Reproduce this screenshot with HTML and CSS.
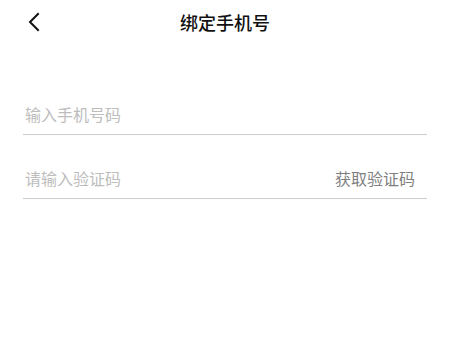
FILE: index.html
```html
<!DOCTYPE html>
<html lang="zh-CN">
<head>
<meta charset="utf-8">
<title>绑定手机号</title>
<link rel="stylesheet" href="styles.css">
</head>
<body>
<div class="page">
  <header class="nav">
    <button class="back" aria-label="返回">
      <svg width="14" height="20" viewBox="0 0 14 20"><path d="M11 2 L3 10 L11 18" fill="none" stroke="#111" stroke-width="2" stroke-linecap="square" stroke-linejoin="miter"/></svg>
    </button>
    <h1 class="title">绑定手机号</h1>
    <span class="nav-spacer"></span>
  </header>
  <form class="form">
    <div class="field">
      <input class="input" type="tel" placeholder="输入手机号码">
    </div>
    <div class="field">
      <input class="input" type="text" placeholder="请输入验证码">
      <button type="button" class="code-btn">获取验证码</button>
    </div>
  </form>
</div>
</body>
</html>
```
FILE: styles.css
```css
* { box-sizing: border-box; }
html, body { margin: 0; padding: 0; background: #fff; }
body {
  font-family: "Noto Sans CJK SC", "Noto Sans", sans-serif;
  width: 450px;
  height: 343px;
  overflow: hidden;
}
.page { display: flex; flex-direction: column; }
.nav {
  height: 44px;
  display: grid;
  grid-template-columns: 60px 1fr 60px;
  align-items: center;
}
.back {
  border: 0;
  background: none;
  padding: 0 0 0 27px;
  height: 44px;
  display: flex;
  align-items: center;
  cursor: pointer;
}
.back svg { display: block; }
.title {
  margin: 0;
  text-align: center;
  font-size: 18px;
  font-weight: 500;
  color: #111;
  line-height: 44px;
}
.form {
  padding: 25px 23px 0 23px;
  display: flex;
  flex-direction: column;
  gap: 25px;
}
.form .field:first-child { margin-top: 27px; }
.field {
  height: 39px;
  padding-bottom: 3px;
  border-bottom: 1px solid #cccccc;
  display: flex;
  align-items: center;
}
.input {
  flex: 1;
  border: 0;
  outline: none;
  padding: 0 0 0 2px;
  font-family: inherit;
  font-size: 16px;
  line-height: 20px;
  color: #333;
  background: transparent;
}
.input::placeholder { color: #bdbdbd; }
.code-btn {
  border: 0;
  background: none;
  padding: 0 12px 0 0;
  font-family: inherit;
  font-size: 16px;
  line-height: 20px;
  color: #7f7f7f;
  cursor: pointer;
}
```
